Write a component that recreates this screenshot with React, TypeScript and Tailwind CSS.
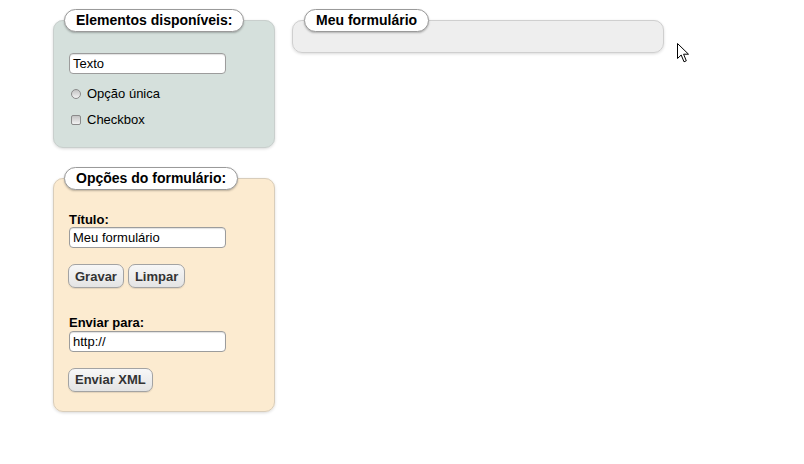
import React from "react";

const font = { fontFamily: '"Liberation Sans", Arial, sans-serif' };

function Legend({ children }: { children: React.ReactNode }) {
  return (
    <legend className="rounded-[12px] border border-[#9a9a9a] bg-white px-[11px] text-[14px] font-bold leading-[21px] text-black shadow-[0_1px_2px_rgba(0,0,0,0.25)]">
      {children}
    </legend>
  );
}

function TextInput({ value }: { value: string }) {
  return (
    <div className="flex h-[21px] w-[157px] items-center rounded-[4px] border border-[#9c9c9c] bg-white pl-[3px] text-[13px] text-black shadow-[inset_0_1px_1px_rgba(0,0,0,0.12)]">
      {value}
    </div>
  );
}

function Button({ children }: { children: React.ReactNode }) {
  return (
    <button className="h-[24px] rounded-[7px] border border-[#a3a3a3] bg-gradient-to-b from-[#f7f7f7] to-[#e4e4e4] px-[6px] text-[13px] font-bold leading-none text-[#333] shadow-[0_1px_1px_rgba(0,0,0,0.1)]">
      {children}
    </button>
  );
}

export default function App() {
  return (
    <div className="relative h-[464px] w-[804px] bg-white" style={font}>
      <div className="flex items-start gap-[17px] pl-[53px] pt-[9px]">
        <div className="flex w-[222px] flex-col gap-[19px]">
          <fieldset className="rounded-[10px] border border-[#c9cfcd] bg-[#d5e0dc] px-[10px] pb-[19px] shadow-[0_1px_3px_rgba(0,0,0,0.15)]">
            <Legend>Elementos disponíveis:</Legend>
            <div className="pl-[5px] pt-[21px]">
              <TextInput value="Texto" />
              <div className="mt-[12px] flex h-[16px] items-center text-[13px] text-black">
                <span className="ml-[2px] mr-[6px] h-[10px] w-[10px] rounded-full border border-[#8a8a8a] bg-gradient-to-b from-[#c4c4c4] to-[#f2f2f2]" />
                Opção única
              </div>
              <div className="mt-[10px] flex h-[16px] items-center text-[13px] text-black">
                <span className="ml-[2px] mr-[6px] h-[10px] w-[10px] rounded-[2px] border border-[#8a8a8a] bg-gradient-to-b from-[#c4c4c4] to-[#f2f2f2]" />
                Checkbox
              </div>
            </div>
          </fieldset>

          <fieldset className="rounded-[10px] border border-[#d8cdbb] bg-[#fcebd0] px-[10px] pb-[19px] shadow-[0_1px_3px_rgba(0,0,0,0.15)]">
            <Legend>Opções do formulário:</Legend>
            <div className="pl-[5px] pt-[22px]">
              <div className="text-[13px] font-bold leading-[15px] text-black">Título:</div>
              <TextInput value="Meu formulário" />
              <div className="mt-[16px] flex gap-[4px] -ml-[1px]">
                <Button>Gravar</Button>
                <Button>Limpar</Button>
              </div>
              <div className="mt-[27px] text-[13px] font-bold leading-[15px] text-black">Enviar para:</div>
              <div className="mt-[1px]">
                <TextInput value="http://" />
              </div>
              <div className="mt-[15px] -ml-[1px]">
                <Button>Enviar XML</Button>
              </div>
            </div>
          </fieldset>
        </div>

        <fieldset className="w-[372px] rounded-[10px] border border-[#cfcfcf] bg-[#eeeeee] px-[11px] pb-[20px] shadow-[0_1px_3px_rgba(0,0,0,0.15)]">
          <Legend>Meu formulário</Legend>
        </fieldset>
      </div>

      <svg className="absolute left-[677px] top-[43px]" width="13" height="20" viewBox="0 0 13 20">
        <path d="M0.5 0.5 L0.5 15.5 L4.2 12 L7 18.8 L9.3 17.8 L6.6 11.2 L11.5 11.2 Z" fill="#fff" stroke="#000" strokeWidth="1" strokeLinejoin="miter" />
      </svg>
    </div>
  );
}
